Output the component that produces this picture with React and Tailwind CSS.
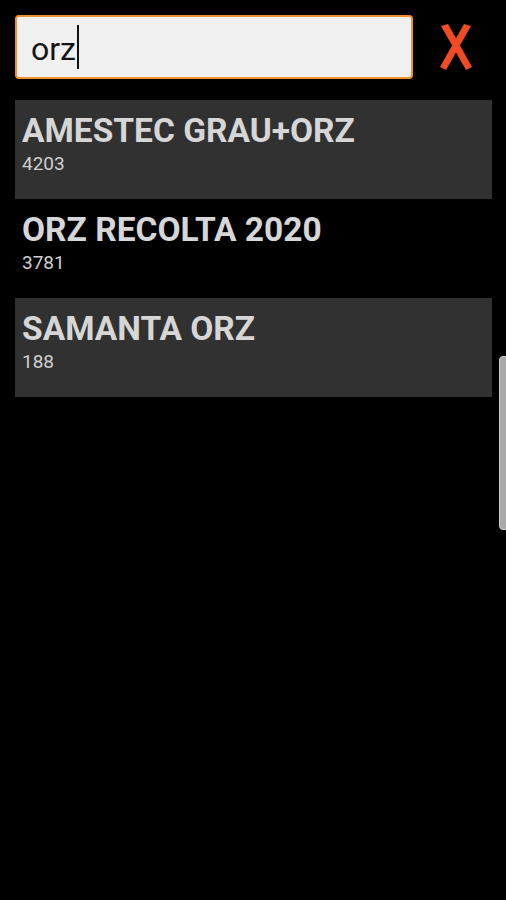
const items = [
  { name: 'AMESTEC GRAU+ORZ', code: '4203' },
  { name: 'ORZ RECOLTA 2020', code: '3781' },
  { name: 'SAMANTA ORZ', code: '188' },
];

const CloseIcon = () => (
  <svg width="36" height="50" viewBox="0 0 36 50">
    <path d="M3 4 L10 2 L34 45 L28 48 Z" fill="#f04b22" />
    <path d="M26 2 L33 4 L8 48 L2 45 Z" fill="#f04b22" />
  </svg>
);

export default function App() {
  return (
    <div
      className="relative w-[506px] h-[900px] bg-black overflow-hidden"
      style={{ fontFamily: 'Roboto, "Liberation Sans", sans-serif' }}
    >
      <div className="flex items-center pt-[15px] pl-[15px]">
        <div className="flex items-center w-[398px] h-[64px] rounded-[4px] border-2 border-[#f0922c] bg-[#f0f0f0] pl-[14px]">
          <span className="text-[32px] leading-none text-[#151515] mt-[3px]">orz</span>
          <span className="w-[2px] h-[44px] bg-[#111] ml-[1px]" />
        </div>
        <div className="ml-[25px]">
          <CloseIcon />
        </div>
      </div>

      <div className="mt-[21px] mx-[15px] w-[477px]">
        {items.map((item, i) => (
          <div
            key={i}
            className={`h-[99px] pt-[11px] pl-[7px] ${i % 2 === 0 ? 'bg-[#313131]' : 'bg-black'}`}
          >
            <p className="text-[33.5px] leading-[40px] font-bold text-[#d6d6d6]">{item.name}</p>
            <p className="mt-[2px] text-[19px] leading-[22px] text-[#cfcfcf]">{item.code}</p>
          </div>
        ))}
      </div>

      <div className="absolute left-[499px] top-[356px] w-[8px] h-[174px] rounded-l-[4px] bg-[#a9a9a9] border border-[#d0d0d0]" />
    </div>
  );
}
